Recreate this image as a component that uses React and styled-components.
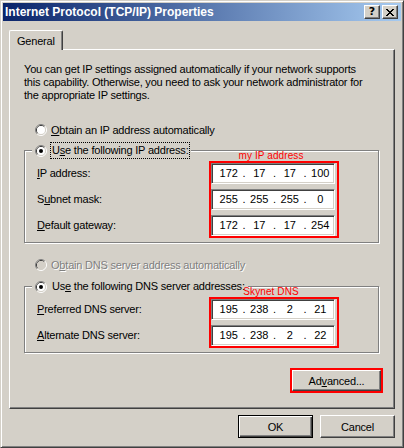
import React from "react";
import styled, { createGlobalStyle } from "styled-components";

const GlobalStyle = createGlobalStyle`
  html, body {
    margin: 0;
    padding: 0;
    background: #d4d0c8;
  }
  body {
    font-family: "Liberation Sans", Arial, sans-serif;
    font-size: 11px;
    letter-spacing: -0.2px;
    color: #000;
  }
  * {
    box-sizing: border-box;
  }
`;

const Window = styled.div`
  width: 404px;
  height: 448px;
  padding: 2px;
  background: #d4d0c8;
  border: 1px solid;
  border-color: #d4d0c8 #404040 #404040 #d4d0c8;
  box-shadow: inset 1px 1px #fff, inset -1px -1px #808080;
  display: flex;
  flex-direction: column;
`;

const TitleBar = styled.div`
  height: 18px;
  display: flex;
  align-items: center;
  padding: 0 3px 0 2px;
  background: linear-gradient(to right, #0a246a, #a6caf0);
  color: #fff;
`;

const TitleText = styled.div`
  flex: 1;
  font-weight: bold;
  font-size: 12px;
  letter-spacing: 0;
  white-space: nowrap;
`;

const CaptionButton = styled.div`
  width: 16px;
  height: 14px;
  margin-left: ${(p) => p.$gap || 0}px;
  display: flex;
  align-items: center;
  justify-content: center;
  background: #d4d0c8;
  border: 1px solid;
  border-color: #fff #404040 #404040 #fff;
  box-shadow: inset -1px -1px #808080;
  color: #000;
  font-family: "DejaVu Sans", sans-serif;
  font-weight: bold;
  font-size: 11px;
  letter-spacing: 0;
  line-height: 12px;
`;

const Body = styled.div`
  flex: 1;
  padding: 9px 6px 0 6px;
  display: flex;
  flex-direction: column;
`;

const TabStrip = styled.div`
  display: flex;
  height: 19px;
`;

const Tab = styled.div`
  position: relative;
  z-index: 1;
  height: 20px;
  padding: 0 7px;
  display: flex;
  align-items: center;
  background: #d4d0c8;
  border-top: 1px solid #fff;
  border-left: 1px solid #fff;
  border-right: 1px solid #404040;
  border-top-left-radius: 2px;
  border-top-right-radius: 2px;
  box-shadow: inset -1px 0 #808080;
`;

const Panel = styled.div`
  height: 360px;
  border: 1px solid;
  border-color: #fff #404040 #404040 #fff;
  box-shadow: inset -1px -1px #808080;
  display: flex;
  flex-direction: column;
`;

const Intro = styled.p`
  margin: 13px 0 0 14px;
  line-height: 13px;
  white-space: nowrap;
`;

const RadioRow = styled.div`
  display: flex;
  align-items: center;
  height: 13px;
  margin: ${(p) => p.$top}px 0 0 25px;
  color: ${(p) => (p.$disabled ? "#808080" : "#000")};
  text-shadow: ${(p) => (p.$disabled ? "1px 1px 0 #fff" : "none")};
`;

const RadioSvg = styled.svg`
  flex: none;
  display: block;
  margin-right: 4px;
`;

const Group = styled.div`
  margin: ${(p) => p.$top}px 0 0 14px;
  width: 355px;
  border: 1px solid #808080;
  box-shadow: inset 1px 1px #fff, 1px 1px #fff;
  padding-bottom: 4px;
  display: flex;
  flex-direction: column;
`;

const Legend = styled.div`
  align-self: flex-start;
  height: 17px;
  margin: -9px 0 -8px 7px;
  padding: 0 1px 0 3px;
  display: flex;
  align-items: center;
  background: #d4d0c8;
`;

const FocusLabel = styled.span`
  margin-left: -1px;
  padding: 1px 1px;
  line-height: 13px;
  border: 1px dotted ${(p) => (p.$focused ? "#000" : "transparent")};
  white-space: nowrap;
`;

const GroupBody = styled.div`
  display: flex;
  margin-left: 12px;
`;

const LabelColumn = styled.div`
  width: 172px;
  padding-top: 12px;
  display: flex;
  flex-direction: column;
  gap: 5px;
`;

const FieldLabel = styled.div`
  height: 21px;
  line-height: 21px;
  white-space: nowrap;
`;

const FieldColumn = styled.div`
  width: 130px;
  display: flex;
  flex-direction: column;
`;

const Annotation = styled.div`
  height: 10px;
  line-height: 10px;
  font-size: 10px;
  letter-spacing: 0.1px;
  color: #ff0000;
  text-align: center;
  padding-right: 6px;
  white-space: nowrap;
`;

const RedBox = styled.div`
  border: 2px solid #ff0000;
  padding-right: ${(p) => p.$pad || 0}px;
  display: flex;
  flex-direction: column;
  gap: 5px;
`;

const IpField = styled.div`
  width: 124px;
  height: 21px;
  padding: 0 1px 0 4px;
  display: flex;
  align-items: center;
  background: #fff;
  border: 1px solid;
  border-color: #808080 #fff #fff #808080;
  box-shadow: inset 1px 1px #404040, inset -1px -1px #d4d0c8;
  letter-spacing: 0;
`;

const Octet = styled.span`
  flex: 1;
  text-align: center;
  line-height: 13px;
`;

const Dot = styled.span`
  width: 5px;
  text-align: center;
  line-height: 13px;
`;

const AdvancedRow = styled.div`
  display: flex;
  justify-content: flex-end;
  margin: 15px 11px 0 0;
`;

const Button = styled.button`
  width: ${(p) => p.$w}px;
  height: ${(p) => p.$h}px;
  padding: 0;
  font: inherit;
  letter-spacing: inherit;
  color: #000;
  background: #d4d0c8;
  border: 1px solid;
  border-color: ${(p) => (p.$default ? "#000" : "#fff #404040 #404040 #fff")};
  box-shadow: ${(p) =>
    p.$default
      ? "inset 1px 1px #fff, inset -1px -1px #404040, inset -2px -2px #808080"
      : "inset -1px -1px #808080"};
  display: flex;
  align-items: center;
  justify-content: center;
`;

const Footer = styled.div`
  display: flex;
  justify-content: flex-end;
  gap: 7px;
  margin-top: 6px;
`;

const Radio = ({ checked, disabled }) => (
  <RadioSvg width="12" height="12" viewBox="0 0 12 12">
    <path d="M2.11 9.89 A5.5 5.5 0 0 1 9.89 2.11" stroke="#808080" fill="none" />
    <path d="M9.89 2.11 A5.5 5.5 0 0 1 2.11 9.89" stroke="#fff" fill="none" />
    <path d="M2.82 9.18 A4.5 4.5 0 0 1 9.18 2.82" stroke="#404040" fill="none" />
    <path d="M9.18 2.82 A4.5 4.5 0 0 1 2.82 9.18" stroke="#d4d0c8" fill="none" />
    <circle cx="6" cy="6" r="4" fill={disabled ? "#d4d0c8" : "#fff"} />
    {checked && <circle cx="6" cy="6" r="2" fill={disabled ? "#808080" : "#000"} />}
  </RadioSvg>
);

const closeRows = ["11000011", "01100110", "00111100", "00011000", "00111100", "01100110", "11000011"];

const CloseGlyph = () => (
  <svg width="8" height="7" viewBox="0 0 8 7" shapeRendering="crispEdges">
    {closeRows.map((row, y) =>
      row.split("").map((c, x) => (c === "1" ? <rect key={`${x}-${y}`} x={x} y={y} width="1" height="1" fill="#000" /> : null))
    )}
  </svg>
);

const IpAddress = ({ value }) => {
  const parts = value.split(".");
  return (
    <IpField>
      {parts.map((p, i) => (
        <React.Fragment key={i}>
          {i > 0 && <Dot>.</Dot>}
          <Octet>{p}</Octet>
        </React.Fragment>
      ))}
    </IpField>
  );
};

const ipRows = [
  { label: <><u>I</u>P address:</>, value: "172.17.17.100" },
  { label: <>S<u>u</u>bnet mask:</>, value: "255.255.255.0" },
  { label: <><u>D</u>efault gateway:</>, value: "172.17.17.254" },
];

const dnsRows = [
  { label: <><u>P</u>referred DNS server:</>, value: "195.238.2.21" },
  { label: <><u>A</u>lternate DNS server:</>, value: "195.238.2.22" },
];

const AddressGroup = ({ top, legend, focused, note, rows }) => (
  <Group $top={top}>
    <Legend>
      <Radio checked />
      <FocusLabel $focused={focused}>{legend}</FocusLabel>
    </Legend>
    <GroupBody>
      <LabelColumn>
        {rows.map((r, i) => (
          <FieldLabel key={i}>{r.label}</FieldLabel>
        ))}
      </LabelColumn>
      <FieldColumn>
        <Annotation>{note}</Annotation>
        <RedBox $pad={2}>
          {rows.map((r, i) => (
            <IpAddress key={i} value={r.value} />
          ))}
        </RedBox>
      </FieldColumn>
    </GroupBody>
  </Group>
);

export default function App() {
  return (
    <>
      <GlobalStyle />
      <Window>
        <TitleBar>
          <TitleText>Internet Protocol (TCP/IP) Properties</TitleText>
          <CaptionButton>?</CaptionButton>
          <CaptionButton $gap={2}>
            <CloseGlyph />
          </CaptionButton>
        </TitleBar>
        <Body>
          <TabStrip>
            <Tab>General</Tab>
          </TabStrip>
          <Panel>
            <Intro>
              You can get IP settings assigned automatically if your network supports
              <br />
              this capability. Otherwise, you need to ask your network administrator for
              <br />
              the appropriate IP settings.
            </Intro>
            <RadioRow $top={21}>
              <Radio />
              <span>
                <u>O</u>btain an IP address automatically
              </span>
            </RadioRow>
            <AddressGroup
              top={14}
              focused
              legend={<>U<u>s</u>e the following IP address:</>}
              note="my IP address"
              rows={ipRows}
            />
            <RadioRow $top={15} $disabled>
              <Radio disabled />
              <span>
                O<u>b</u>tain DNS server address automatically
              </span>
            </RadioRow>
            <AddressGroup
              top={15}
              legend={<>Us<u>e</u> the following DNS server addresses:</>}
              note="Skynet DNS"
              rows={dnsRows}
            />
            <AdvancedRow>
              <RedBox>
                <Button $w={89} $h={21}>
                  Ad<u>v</u>anced...
                </Button>
              </RedBox>
            </AdvancedRow>
          </Panel>
          <Footer>
            <Button $w={75} $h={23} $default>
              OK
            </Button>
            <Button $w={75} $h={23}>
              Cancel
            </Button>
          </Footer>
        </Body>
      </Window>
    </>
  );
}
